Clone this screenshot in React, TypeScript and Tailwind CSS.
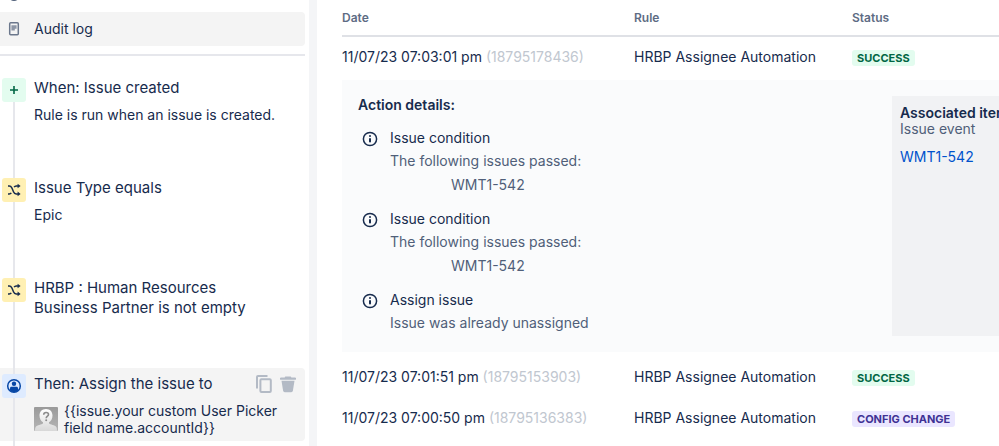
import type { ReactNode } from "react";

function InfoIcon() {
  return (
    <svg viewBox="0 0 16 16" className="size-4 shrink-0" fill="none" aria-hidden="true">
      <circle cx="8" cy="8" r="6.6" stroke="#172b4d" strokeWidth="1.5" />
      <circle cx="8" cy="5.1" r="1" fill="#172b4d" />
      <rect x="7" y="7" width="2" height="4.6" rx="1" fill="#172b4d" />
    </svg>
  );
}

function AuditIcon() {
  return (
    <svg viewBox="0 0 12 16" className="h-4 w-3" fill="none" aria-hidden="true">
      <rect x="1.7" y="1.7" width="8.6" height="12" rx="1" stroke="#6b778c" strokeWidth="1.5" />
      <path d="M3.4 4.3h5.2v3.4H6.8v1.8H3.4z" fill="#6b778c" opacity="0.75" />
    </svg>
  );
}

function PlusIcon() {
  return (
    <svg viewBox="0 0 10 10" className="size-[10px]" aria-hidden="true">
      <path d="M5 1v8M1 5h8" stroke="#006644" strokeWidth="1.6" />
    </svg>
  );
}

function ShuffleIcon() {
  return (
    <svg viewBox="0 0 16 16" className="size-4" fill="none" stroke="#172b4d" strokeWidth="1.5" aria-hidden="true">
      <path d="M2 4h1.2c1.4 0 2 .6 2.6 1.8l1.8 4.2c.5 1.3 1.2 1.9 2.6 1.9H12" />
      <path d="M2 12h1.2c1 0 1.6-.4 2.1-1.1M8.1 5.2C8.6 4.4 9.2 4 10.2 4H12" />
      <path d="M11.6 1.7l3 2.3-3 2.3zM11.6 9.6l3 2.3-3 2.3z" fill="#172b4d" stroke="none" />
    </svg>
  );
}

function PersonIcon() {
  return (
    <svg viewBox="0 0 16 16" className="size-4" aria-hidden="true">
      <circle cx="8" cy="8" r="6.3" fill="none" stroke="#0747a6" strokeWidth="1.5" />
      <circle cx="8" cy="5.8" r="2.2" fill="#0747a6" />
      <path d="M4 12.5v-2.3c0-1 .6-1.500 1.5-1.5h5c.9 0 1.5.5 1.5 1.5v2.300c-2 2-6 2-8 0z" fill="#0747a6" />
    </svg>
  );
}

function CopyIcon() {
  return (
    <svg viewBox="0 0 16 20" className="h-5 w-4" fill="none" stroke="#b3bac5" strokeWidth="2" aria-hidden="true">
      <path d="M1 14.5V3a1 1 0 0 1 1-1h9.5" />
      <rect x="4.4" y="5.2" width="10.4" height="12.8" rx="1" />
    </svg>
  );
}

function TrashIcon() {
  return (
    <svg viewBox="0 0 16 20" className="h-5 w-4" fill="#b3bac5" aria-hidden="true">
      <path d="M5.5 2.500h5a.7.7 0 0 1 .7.7v.300H15a1 1 0 0 1 0 2.200H1a1 1 0 0 1 0-2.200h3.800v-.3a.7.7 0 0 1 .7-.7z" />
      <path d="M1.500 6.700h13l-1.600 10a1.800 1.800 0 0 1-1.700 1.500H4.800a1.800 1.800 0 0 1-1.700-1.500z" />
    </svg>
  );
}

function Avatar() {
  return (
    <svg viewBox="0 0 24 24" className="size-6 shrink-0" aria-hidden="true">
      <defs>
        <linearGradient id="avatar-back" x1="0" y1="0" x2="0" y2="1">
          <stop offset="0" stopColor="#9a9a9a" />
          <stop offset="1" stopColor="#b5b5b5" />
        </linearGradient>
        <linearGradient id="avatar-body" x1="0" y1="0" x2="0" y2="1">
          <stop offset="0" stopColor="#ffffff" />
          <stop offset="1" stopColor="#d8d8d8" />
        </linearGradient>
      </defs>
      <rect width="24" height="24" rx="1" fill="url(#avatar-back)" />
      <path
        d="M12 2c4 0 6.5 2.8 6.5 6.5 0 3.2-1.5 5.6-3.5 6.8v1.2c1 1 6 1.5 7.3 3.5.6 1 .7 2.5.7 4H1c0-1.5.1-3 .7-4 1.3-2 6.3-2.5 7.3-3.5v-1.2C7 14.1 5.5 11.7 5.5 8.5 5.5 4.8 8 2 12 2z"
        fill="url(#avatar-body)"
      />
      <path
        d="M9.7 7.8c0-1.5 1-2.3 2.4-2.3s2.4.8 2.4 2c0 1.7-2.3 1.6-2.3 3.7"
        fill="none"
        stroke="#8c8c8c"
        strokeWidth="1.6"
      />
      <circle cx="12.2" cy="13.2" r="1" fill="#8c8c8c" />
    </svg>
  );
}

type StepProps = {
  tone: string;
  icon: ReactNode;
  title: string;
  actions?: ReactNode;
  children?: ReactNode;
  className: string;
};

function Step({ tone, icon, title, actions, children, className }: StepProps) {
  return (
    <li className={`flex gap-2 pl-[2px] ${className}`}>
      <span className={`relative z-10 flex size-6 shrink-0 items-center justify-center rounded-[3px] ${tone}`}>
        {icon}
      </span>
      <div className="min-w-0 flex-1">
        <div className="flex justify-between">
          <h3 className="max-w-[220px] text-[15px] leading-5">{title}</h3>
          {actions}
        </div>
        {children}
      </div>
    </li>
  );
}

function Lozenge({ tone, children }: { tone: string; children: ReactNode }) {
  return (
    <span className={`inline-block rounded-[3px] px-[5px] text-[11px] leading-4 font-bold uppercase ${tone}`}>
      {children}
    </span>
  );
}

function Detail({ title, text, issue }: { title: string; text: string; issue?: string }) {
  return (
    <li className="flex gap-3">
      <span className="flex h-6 items-center">
        <InfoIcon />
      </span>
      <div>
        <h3 className="leading-[22px]">{title}</h3>
        <p className="leading-6 text-[#505f79]">{text}</p>
        {issue && <p className="pl-[61px] leading-6 text-[#505f79]">{issue}</p>}
      </div>
    </li>
  );
}

type LogRowProps = { time: string; id: string; tone: string; status: string };

function LogRow({ time, id, tone, status }: LogRowProps) {
  return (
    <tr className="h-[41px]">
      <td className="p-0">
        {time} <span className="text-[#c1c7d0]">({id})</span>
      </td>
      <td className="p-0">HRBP Assignee Automation</td>
      <td className="p-0">
        <Lozenge tone={tone}>{status}</Lozenge>
      </td>
    </tr>
  );
}

const GREEN = "bg-[#e3fcef] text-[#006644]";
const PURPLE = "bg-[#eae6ff] text-[#403294]";

export default function App() {
  return (
    <div className="flex h-screen overflow-hidden bg-white font-['Inter','Liberation_Sans',sans-serif] text-sm text-[#172b4d]">
      <aside className="w-[309px] shrink-0 pr-1">
        <nav className="-mt-[22px]">
          <a href="#details" className="flex h-[34px] items-center pl-2">
            <span className="w-[26px]">
              <span className="block size-3 rounded-full bg-[#505f79]" />
            </span>
            Rule details
          </a>
          <a href="#audit" className="flex h-[34px] items-center rounded-r-sm bg-[#f4f4f4] pl-2">
            <span className="w-[26px]">
              <AuditIcon />
            </span>
            Audit log
          </a>
        </nav>
        <hr className="mt-2 border-t-2 border-[#e6e7ec]" />
        <ol className="relative mt-[22px] before:absolute before:top-3 before:-bottom-2 before:left-[13px] before:w-[2px] before:bg-[#e6e7ec]">
          <Step className="h-[100px]" tone="bg-[#e3fcef]" title="When: Issue created" icon={<PlusIcon />}>
            <p className="mt-[7px] leading-5">Rule is run when an issue is created.</p>
          </Step>
          <Step className="h-[100px]" tone="bg-[#fff0b3]" title="Issue Type equals" icon={<ShuffleIcon />}>
            <p className="mt-[7px] leading-5">Epic</p>
          </Step>
          <Step
            className="h-[90px]"
            tone="bg-[#fff0b3]"
            title="HRBP : Human Resources Business Partner is not empty"
            icon={<ShuffleIcon />}
          />
          <Step
            className="rounded-r-sm bg-[#f4f4f4] pt-[6px] pr-[9px] pb-1"
            tone="bg-[#deebff]"
            title="Then: Assign the issue to"
            icon={<PersonIcon />}
            actions={
              <div className="flex gap-2">
                <button type="button" aria-label="Copy">
                  <CopyIcon />
                </button>
                <button type="button" aria-label="Delete">
                  <TrashIcon />
                </button>
              </div>
            }
          >
            <div className="mt-[7px] flex items-center gap-[6px]">
              <Avatar />
              <p className="max-w-[220px] py-[1px] leading-[17px]">
                {"{{issue.your custom User Picker field name.accountId}}"}
              </p>
            </div>
          </Step>
        </ol>
      </aside>
      <div className="w-2 shrink-0 bg-[#f4f5f7]" />
      <main className="min-w-0 flex-1 overflow-hidden pl-[25px]">
        <table className="w-full min-w-[800px] table-fixed border-collapse text-left">
          <colgroup>
            <col className="w-[292px]" />
            <col className="w-[218px]" />
            <col />
          </colgroup>
          <thead>
            <tr className="h-9 border-b-2 border-[#dfe1e6] text-xs text-[#5e6c84]">
              <th className="p-0 font-semibold">Date</th>
              <th className="p-0 font-semibold">Rule</th>
              <th className="p-0 font-semibold">Status</th>
            </tr>
          </thead>
          <tbody>
            <LogRow time="11/07/23 07:03:01 pm" id="18795178436" tone={GREEN} status="Success" />
            <tr>
              <td colSpan={3} className="px-0 pt-[3px] pb-1">
                <div className="flex bg-[#fafbfc] p-4">
                  <section className="min-w-0 flex-1 pb-[1px]">
                    <h2 className="leading-[18px] font-semibold">Action details:</h2>
                    <ul className="mt-[13px] flex flex-col gap-[11px] pl-1">
                      <Detail title="Issue condition" text="The following issues passed:" issue="WMT1-542" />
                      <Detail title="Issue condition" text="The following issues passed:" issue="WMT1-542" />
                      <Detail title="Assign issue" text="Issue was already unassigned" />
                    </ul>
                  </section>
                  <section className="w-[234px] shrink-0 bg-[#f1f2f4] px-2 py-[9px]">
                    <h2 className="leading-4 font-semibold">Associated items</h2>
                    <p className="leading-4 text-[#505f79]">Issue event</p>
                    <a href="#WMT1-542" className="mt-2 block leading-6 text-[#0052cc]">
                      WMT1-542
                    </a>
                  </section>
                </div>
              </td>
            </tr>
            <LogRow time="11/07/23 07:01:51 pm" id="18795153903" tone={GREEN} status="Success" />
            <LogRow time="11/07/23 07:00:50 pm" id="18795136383" tone={PURPLE} status="Config change" />
          </tbody>
        </table>
      </main>
    </div>
  );
}
